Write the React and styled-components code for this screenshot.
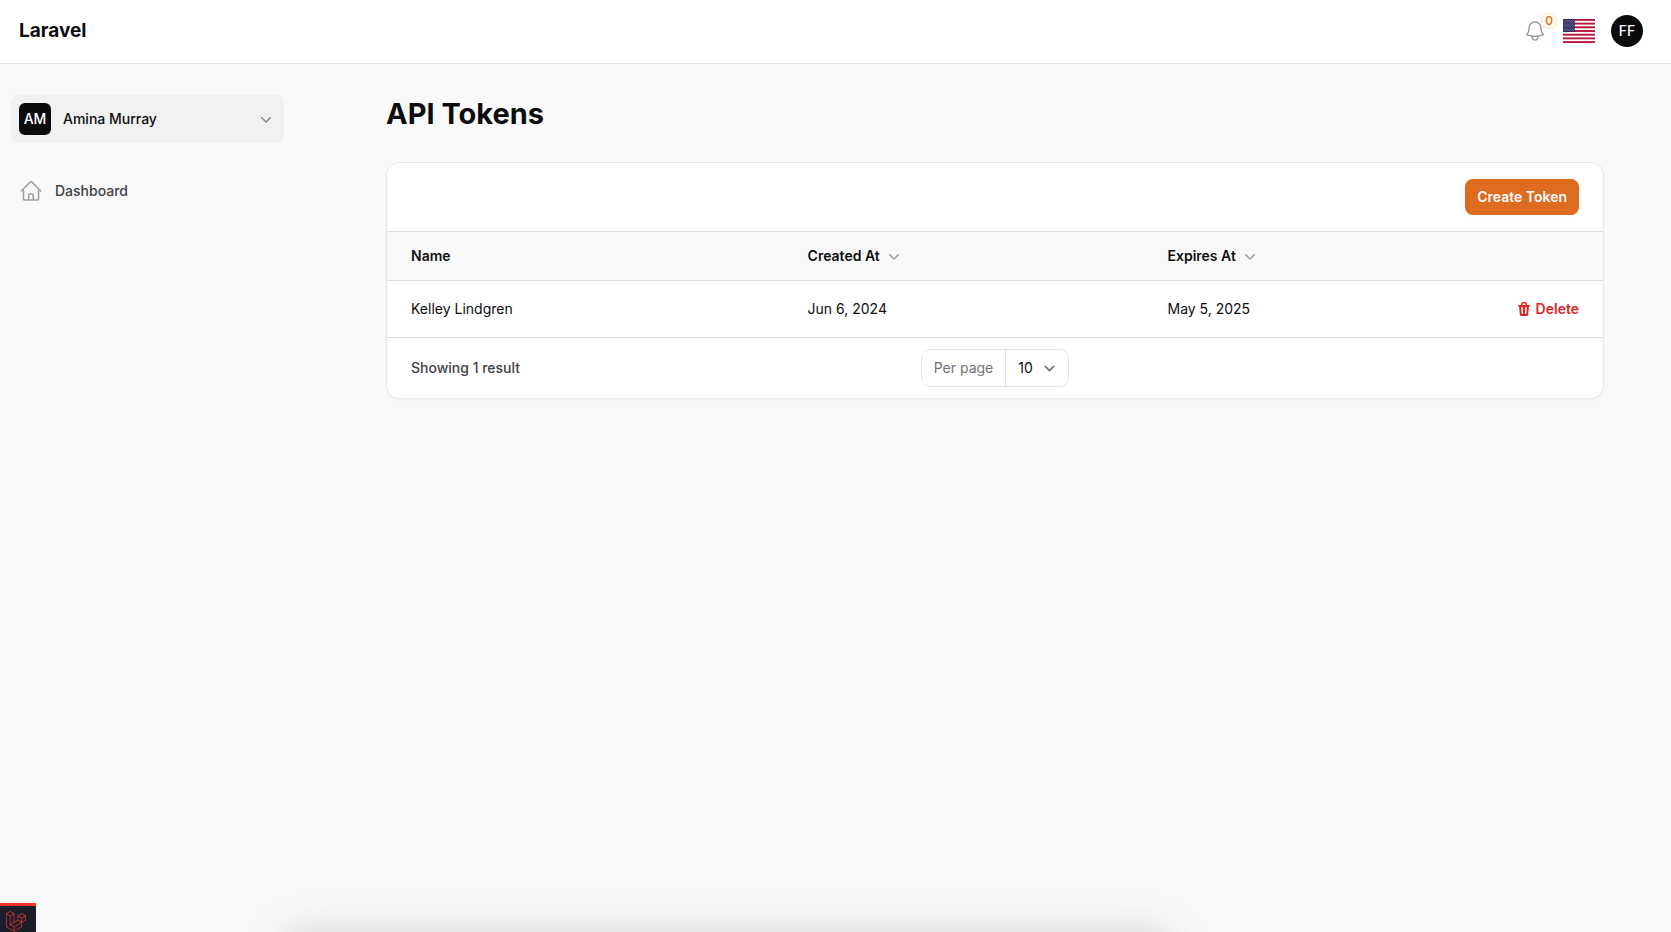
import React from "react";
import styled, { createGlobalStyle } from "styled-components";

const GlobalStyle = createGlobalStyle`
  *, *::before, *::after { box-sizing: border-box; }
  body {
    margin: 0;
    background: #f9f9f9;
    color: #0d0d0f;
    font-family: Inter, "Liberation Sans", sans-serif;
    font-size: 14px;
    line-height: 20px;
    -webkit-font-smoothing: antialiased;
  }
  button, select { font: inherit; color: inherit; cursor: pointer; }
  a { color: inherit; text-decoration: none; }
  h1 { margin: 0; }
  svg { display: block; flex: none; }
`;

const Page = styled.div`
  min-height: 100vh;
  overflow-x: hidden;
`;

const Topbar = styled.header`
  display: flex;
  align-items: center;
  justify-content: space-between;
  height: 64px;
  padding: 0 28px 1px 19px;
  background: #fff;
  border-bottom: 1px solid #e2e2e4;
`;

const Brand = styled.a`
  font-size: 19px;
  line-height: 24px;
  font-weight: 700;
`;

const TopActions = styled.div`
  display: flex;
  align-items: center;
  gap: 16px;
`;

const IconButton = styled.button`
  position: relative;
  display: flex;
  padding: 0;
  border: 0;
  background: none;
  color: #9c9ca5;
`;

const CountBadge = styled.span`
  position: absolute;
  top: -6px;
  left: 18px;
  min-width: 16px;
  height: 16px;
  border: 1px solid #fbecd2;
  border-radius: 6px;
  background: #fff8eb;
  color: #dd6b20;
  font-size: 12px;
  line-height: 14px;
  font-weight: 500;
  text-align: center;
`;

const Avatar = styled.span`
  display: flex;
  align-items: center;
  justify-content: center;
  flex: none;
  width: 32px;
  height: 32px;
  border-radius: ${(p) => (p.$round ? "50%" : "6px")};
  background: #0b0b0c;
  color: #fff;
  font-weight: 500;
`;

const Columns = styled.div`
  display: flex;
  align-items: flex-start;
`;

const Sidebar = styled.aside`
  flex: none;
  width: 319px;
  padding: 31px 35px 0 11px;
`;

const TenantButton = styled.button`
  display: flex;
  align-items: center;
  gap: 12px;
  width: 100%;
  padding: 8px;
  border: 0;
  border-radius: 8px;
  background: #f1f1f1;
  font-weight: 500;
  text-align: left;
`;

const TenantName = styled.span`
  flex: 1;
`;

const ChevronSlot = styled.span`
  color: #85858d;
`;

const Nav = styled.nav`
  margin-top: 28px;
`;

const NavLink = styled.a`
  display: flex;
  align-items: center;
  gap: 12px;
  padding: 8px;
  color: #3f3f46;
  font-weight: 500;

  svg { color: #9c9ca5; }
`;

const Main = styled.main`
  flex: 1;
  min-width: 0;
  max-width: 1282px;
  margin: 0 auto;
  padding: 32px;
`;

const Title = styled.h1`
  font-size: 29px;
  line-height: 36px;
  font-weight: 700;
`;

const Card = styled.section`
  margin-top: 30px;
  overflow: hidden;
  border: 1px solid #e8e8e9;
  border-radius: 13px;
  background: #fff;
  box-shadow: 0 1px 2px rgba(0, 0, 0, 0.05);
`;

const CardToolbar = styled.div`
  display: flex;
  justify-content: flex-end;
  padding: 16px 24px;
`;

const PrimaryButton = styled.button`
  padding: 8px 12px;
  border: 0;
  border-radius: 8px;
  background: #dd6b20;
  color: #fff;
  font-weight: 600;
  box-shadow: 0 1px 2px rgba(0, 0, 0, 0.05);
`;

const Table = styled.table`
  width: 100%;
  table-layout: fixed;
  border-collapse: separate;
  border-spacing: 0;
`;

const HeadCell = styled.th`
  width: ${(p) => p.$width};
  height: 50px;
  padding: 0 12px;
  border-top: 1px solid #dfdfe1;
  border-bottom: 1px solid #dfdfe1;
  background: #f9f9f9;
  font-weight: 600;
  text-align: left;

  &:first-child { padding-left: 24px; }
`;

const SortButton = styled.button`
  display: flex;
  align-items: center;
  gap: 4px;
  padding: 0;
  border: 0;
  background: none;

  svg { color: #9c9ca5; }
`;

const Cell = styled.td`
  height: 57px;
  padding: 0 12px;
  border-bottom: 1px solid #dfdfe1;

  &:first-child { padding-left: 24px; }
  &:last-child { padding-right: 24px; }
`;

const DeleteButton = styled.button`
  display: flex;
  align-items: center;
  gap: 4px;
  margin-left: auto;
  padding: 0;
  border: 0;
  background: none;
  color: #dc2626;
  font-weight: 600;
`;

const CardFooter = styled.footer`
  display: grid;
  grid-template-columns: 1fr auto 1fr;
  align-items: center;
  padding: 11px 24px;
`;

const ResultCount = styled.span`
  color: #3f3f46;
  font-weight: 500;
`;

const PerPage = styled.label`
  display: flex;
  align-items: center;
  height: 38px;
  border: 1px solid #e2e2e4;
  border-radius: 9px;
  background: #fff;
  color: #71717a;
`;

const PerPageText = styled.span`
  padding: 0 12px;
  line-height: 36px;
  border-right: 1px solid #e2e2e4;
`;

const SelectWrap = styled.span`
  position: relative;
  display: flex;
  align-items: center;

  svg {
    position: absolute;
    right: 8px;
    color: #6b7280;
    pointer-events: none;
  }
`;

const Select = styled.select`
  appearance: none;
  width: 62px;
  height: 36px;
  padding: 0 0 0 12px;
  border: 0;
  background: none;
  color: #0d0d0f;
`;

const DebugBadge = styled.a`
  position: fixed;
  left: 0;
  bottom: 0;
  width: 36px;
  height: 29px;
  padding: 5px 0 0 6px;
  overflow: hidden;
  border-top: 3px solid #f4352c;
  background: #1b1f2a;
`;

const BottomShade = styled.div`
  position: fixed;
  top: 100%;
  left: 17%;
  right: 30%;
  height: 60px;
  box-shadow: 0 0 42px rgba(0, 0, 0, 0.15);
  pointer-events: none;
`;

const BellIcon = () => (
  <svg width="24" height="24" viewBox="0 0 24 24" fill="none" stroke="currentColor" strokeWidth="1.5" strokeLinecap="round" strokeLinejoin="round" aria-hidden="true">
    <path d="M14.857 17.082a23.848 23.848 0 0 0 5.454-1.31A8.967 8.967 0 0 1 18 9.75V9A6 6 0 0 0 6 9v.75a8.967 8.967 0 0 1-2.312 6.022c1.733.64 3.56 1.085 5.455 1.31m5.714 0a24.255 24.255 0 0 1-5.714 0m5.714 0a3 3 0 1 1-5.714 0" />
  </svg>
);

const HomeIcon = () => (
  <svg width="24" height="24" viewBox="0 0 24 24" fill="none" stroke="currentColor" strokeWidth="1.5" strokeLinecap="round" strokeLinejoin="round" aria-hidden="true">
    <path d="m2.25 12 8.954-8.955c.44-.439 1.152-.439 1.591 0L21.75 12M4.5 9.75v10.125c0 .621.504 1.125 1.125 1.125H9.75v-4.875c0-.621.504-1.125 1.125-1.125h2.25c.621 0 1.125.504 1.125 1.125V21h4.125c.621 0 1.125-.504 1.125-1.125V9.75M8.25 21h8.25" />
  </svg>
);

const ChevronIcon = () => (
  <svg width="20" height="20" viewBox="0 0 20 20" fill="currentColor" aria-hidden="true">
    <path fillRule="evenodd" clipRule="evenodd" d="M5.22 8.22a.75.75 0 0 1 1.06 0L10 11.94l3.72-3.72a.75.75 0 1 1 1.06 1.06l-4.25 4.25a.75.75 0 0 1-1.06 0L5.22 9.28a.75.75 0 0 1 0-1.06Z" />
  </svg>
);

const SelectChevron = () => (
  <svg width="21" height="21" viewBox="0 0 20 20" fill="none" stroke="currentColor" strokeWidth="1.5" strokeLinecap="round" strokeLinejoin="round" aria-hidden="true">
    <path d="m6 8 4 4 4-4" />
  </svg>
);

const TrashIcon = () => (
  <svg width="16" height="16" viewBox="0 0 16 16" fill="currentColor" aria-hidden="true">
    <path fillRule="evenodd" clipRule="evenodd" d="M5 3.25V4H2.75a.75.75 0 0 0 0 1.5h.3l.815 8.15A1.5 1.5 0 0 0 5.357 15h5.285a1.5 1.5 0 0 0 1.493-1.35l.815-8.15h.3a.75.75 0 0 0 0-1.5H11v-.75A2.25 2.25 0 0 0 8.75 1h-1.5A2.25 2.25 0 0 0 5 3.25Zm2.25-.75a.75.75 0 0 0-.75.75V4h3v-.75a.75.75 0 0 0-.75-.75h-1.5ZM6.05 6a.75.75 0 0 1 .787.713l.275 5.5a.75.75 0 0 1-1.498.075l-.275-5.5A.75.75 0 0 1 6.05 6Zm3.9 0a.75.75 0 0 1 .712.787l-.275 5.5a.75.75 0 0 1-1.498-.075l.275-5.5a.75.75 0 0 1 .786-.711Z" />
  </svg>
);

const STRIPES = [0, 1, 2, 3, 4, 5, 6, 7, 8, 9, 10, 11, 12];
const STAR_ROWS = [0, 1, 2, 3, 4, 5, 6, 7, 8];

const FlagIcon = () => (
  <svg width="32" height="24" viewBox="0 0 640 480" preserveAspectRatio="none" role="img" aria-label="English (US)">
    <rect width="640" height="480" fill="#fff" />
    {STRIPES.filter((n) => n % 2 === 0).map((n) => (
      <rect key={n} y={n * 36.92} width="640" height="36.92" fill="#b31335" />
    ))}
    <rect width="235" height="258.5" fill="#2f2e63" />
    {STAR_ROWS.map((row) =>
      Array.from({ length: row % 2 === 0 ? 6 : 5 }, (_, i) => (
        <circle key={`${row}-${i}`} cx={20 + i * 39 + (row % 2) * 19.5} cy={26 + row * 25.8} r="6.5" fill="#fff" />
      ))
    )}
  </svg>
);

const LaravelMark = () => (
  <svg width="20" height="21" viewBox="0 0 50 52" fill="#f4352c" aria-hidden="true">
    <path d="M49.626 11.564a.809.809 0 0 1 .028.209v10.972a.8.8 0 0 1-.402.694l-9.209 5.302V39.25c0 .286-.152.55-.4.694L20.42 51.01c-.044.025-.092.041-.14.058-.018.006-.035.017-.054.022a.805.805 0 0 1-.41 0c-.022-.006-.042-.018-.063-.026-.044-.016-.09-.03-.132-.054L.402 39.944A.801.801 0 0 1 0 39.25V6.334c0-.072.01-.142.028-.21.006-.023.02-.044.028-.067.015-.042.029-.085.051-.124.015-.026.037-.047.055-.071.023-.032.044-.065.071-.093.023-.023.053-.04.079-.06.029-.024.055-.05.088-.069h.001l9.61-5.533a.802.802 0 0 1 .8 0l9.61 5.533h.002c.032.02.059.045.088.068.026.02.055.038.078.06.028.029.048.062.072.094.017.024.04.045.054.071.023.04.036.082.052.124.008.023.022.044.028.068a.809.809 0 0 1 .028.209v20.559l8.008-4.611v-10.51c0-.07.01-.141.028-.208.007-.024.02-.045.028-.068.016-.042.03-.085.052-.124.015-.026.037-.047.054-.071.024-.032.044-.065.072-.093.023-.023.052-.04.078-.06.03-.024.056-.05.088-.069h.001l9.611-5.533a.801.801 0 0 1 .8 0l9.61 5.533c.034.02.06.045.09.068.025.02.054.038.077.06.028.029.048.062.072.094.018.024.04.045.054.071.023.039.036.082.052.124.009.023.022.044.028.068zm-1.574 10.718v-9.124l-3.363 1.936-4.646 2.675v9.124l8.01-4.611zm-9.61 16.505v-9.13l-4.57 2.61-13.05 7.448v9.216l17.62-10.144zM1.602 7.719v31.068L19.22 48.93v-9.214l-9.204-5.209-.003-.002-.004-.002c-.031-.018-.057-.044-.086-.066-.025-.02-.054-.036-.076-.058l-.002-.003c-.026-.025-.044-.056-.066-.084-.02-.027-.044-.05-.06-.078l-.001-.003c-.018-.03-.029-.066-.042-.1-.013-.03-.03-.058-.038-.09v-.001c-.01-.038-.012-.078-.016-.117-.004-.03-.012-.06-.012-.09v-.002-21.481L4.965 9.654 1.602 7.72zm8.81-5.994L2.405 6.334l8.005 4.609 8.006-4.61-8.006-4.608zm4.164 28.764l4.645-2.674V7.719l-3.363 1.936-4.646 2.675v20.096l3.364-1.937zM39.243 7.164l-8.006 4.609 8.006 4.609 8.005-4.61-8.005-4.608zm-.801 10.605l-4.646-2.675-3.363-1.936v9.124l4.645 2.674 3.364 1.937v-9.124zM20.02 38.33l11.743-6.704 5.87-3.35-8-4.606-9.211 5.303-8.395 4.833 7.993 4.524z" />
  </svg>
);

const tokens = [
  { name: "Kelley Lindgren", created: "Jun 6, 2024", expires: "May 5, 2025" },
];

export default function App() {
  return (
    <Page>
      <GlobalStyle />
      <Topbar>
        <Brand href="#">Laravel</Brand>
        <TopActions>
          <IconButton type="button" aria-label="Notifications">
            <BellIcon />
            <CountBadge>0</CountBadge>
          </IconButton>
          <IconButton type="button" aria-label="Language">
            <FlagIcon />
          </IconButton>
          <IconButton type="button" aria-label="User menu">
            <Avatar $round>FF</Avatar>
          </IconButton>
        </TopActions>
      </Topbar>

      <Columns>
        <Sidebar>
          <TenantButton type="button">
            <Avatar>AM</Avatar>
            <TenantName>Amina Murray</TenantName>
            <ChevronSlot>
              <ChevronIcon />
            </ChevronSlot>
          </TenantButton>
          <Nav>
            <NavLink href="#">
              <HomeIcon />
              Dashboard
            </NavLink>
          </Nav>
        </Sidebar>

        <Main>
          <Title>API Tokens</Title>
          <Card>
            <CardToolbar>
              <PrimaryButton type="button">Create Token</PrimaryButton>
            </CardToolbar>
            <Table>
              <thead>
                <tr>
                  <HeadCell scope="col" $width="33.6%">Name</HeadCell>
                  <HeadCell scope="col" $width="29.6%">
                    <SortButton type="button">Created At <ChevronIcon /></SortButton>
                  </HeadCell>
                  <HeadCell scope="col" $width="18%">
                    <SortButton type="button">Expires At <ChevronIcon /></SortButton>
                  </HeadCell>
                  <HeadCell aria-label="Actions" />
                </tr>
              </thead>
              <tbody>
                {tokens.map((t) => (
                  <tr key={t.name}>
                    <Cell>{t.name}</Cell>
                    <Cell>{t.created}</Cell>
                    <Cell>{t.expires}</Cell>
                    <Cell>
                      <DeleteButton type="button">
                        <TrashIcon />
                        Delete
                      </DeleteButton>
                    </Cell>
                  </tr>
                ))}
              </tbody>
            </Table>
            <CardFooter>
              <ResultCount>Showing 1 result</ResultCount>
              <PerPage>
                <PerPageText>Per page</PerPageText>
                <SelectWrap>
                  <Select defaultValue="10">
                    <option>5</option>
                    <option>10</option>
                    <option>25</option>
                    <option>50</option>
                  </Select>
                  <SelectChevron />
                </SelectWrap>
              </PerPage>
            </CardFooter>
          </Card>
        </Main>
      </Columns>

      <BottomShade />
      <DebugBadge href="#" aria-label="Debug bar">
        <LaravelMark />
      </DebugBadge>
    </Page>
  );
}
